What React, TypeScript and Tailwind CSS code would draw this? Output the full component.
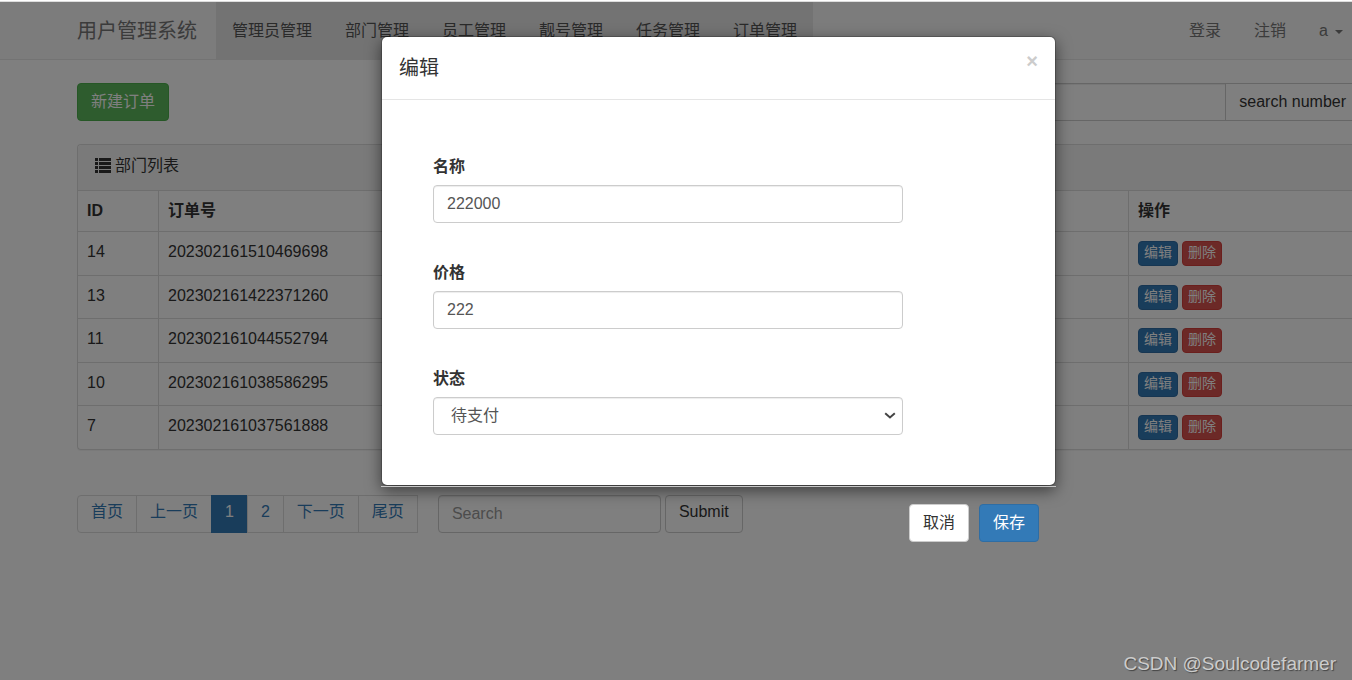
import clsx from "clsx";
import type { ReactNode } from "react";

type ButtonVariant = "default" | "primary" | "success" | "danger";
type ButtonSize = "md" | "xs";

interface ButtonProps {
    variant?: ButtonVariant;
    size?: ButtonSize;
    className?: string;
    children: ReactNode;
}

const buttonVariants: Record<ButtonVariant, string> = {
    default: "bg-white text-[#333] border-[#ccc]",
    primary: "bg-[#337ab7] text-white border-[#2e6da4]",
    success: "bg-[#5cb85c] text-white border-[#4cae4c]",
    danger: "bg-[#d9534f] text-white border-[#d43f3a]",
}

const buttonSizes: Record<ButtonSize, string> = {
    md: "h-[38px] px-[13px] text-base leading-6",
    xs: "h-[25px] px-[5px] pb-[3px] text-sm leading-5",
}

const Button = ({ variant = "default", size = "md", className, children }: ButtonProps) => (
    <button
        type="button"
        className={clsx("flex shrink-0 items-center justify-center whitespace-nowrap rounded border", buttonVariants[variant], buttonSizes[size], className)}
    >
        {children}
    </button>
)

const inputStyle = "h-[38px] rounded border border-[#ccc] bg-white px-[13px] text-base text-[#555] placeholder:text-[#999] shadow-[inset_0_1px_1px_rgba(0,0,0,0.075)]";

const menus = ["管理员管理", "部门管理", "员工管理", "靓号管理", "任务管理", "订单管理"];

const orders = [
    { id: 14, oid: "202302161510469698" },
    { id: 13, oid: "202302161422371260" },
    { id: 11, oid: "202302161044552794" },
    { id: 10, oid: "202302161038586295" },
    { id: 7, oid: "202302161037561888" },
];

const pages = ["首页", "上一页", "1", "2", "下一页", "尾页"];

const Navbar = () => (
    <nav className="flex h-[58px] items-stretch border-b border-[#e7e7e7] bg-[#f8f8f8] pl-[77px] pr-[9px] text-[#777]">
        <a href="#" className="flex items-center pr-[19px] text-xl whitespace-nowrap">用户管理系统</a>
        <ul className="flex gap-px bg-[#e7e7e7] text-[#555]">
            {menus.map((menu) => (
                <li key={menu} className="flex">
                    <a href="#" className="flex items-center px-4 whitespace-nowrap">{menu}</a>
                </li>
            ))}
        </ul>
        <ul className="ml-auto flex items-center gap-[33px] whitespace-nowrap">
            <li><a href="#">登录</a></li>
            <li><a href="#">注销</a></li>
            <li>
                <a href="#" className="flex items-center gap-[7px]">
                    a
                    <svg className="mt-0.5 h-1 w-2" viewBox="0 0 8 4" fill="currentColor">
                        <path d="M0 0h8L4 4z" />
                    </svg>
                </a>
            </li>
        </ul>
    </nav>
)

const ListIcon = () => (
    <svg className="h-4 w-4" viewBox="0 0 16 16" fill="currentColor">
        <path d="M0 0h3v3H0zM4 0h12v3H4zM0 4h3v3H0zM4 4h12v3H4zM0 8h3v3H0zM4 8h12v3H4zM0 12h3v3H0zM4 12h12v3H4z" />
    </svg>
)

const OrderPanel = () => (
    <section className="mt-[23px] rounded-l border border-r-0 border-[#ddd] shadow-[0_1px_1px_rgba(0,0,0,0.05)]">
        <div className="flex h-[46px] items-center gap-1 rounded-tl border-b border-[#ddd] bg-[#f5f5f5] pb-1 pl-[17px]">
            <ListIcon />
            部门列表
        </div>
        <table className="w-full table-fixed border-separate border-spacing-0">
            <thead>
                <tr className="h-[41px] text-left align-top">
                    <th className="w-20 border-b border-[#ddd] px-[9px] pt-2">ID</th>
                    <th className="border-b border-l border-[#ddd] px-[9px] pt-2">订单号</th>
                    <th className="w-56 border-b border-l border-[#ddd] px-[9px] pt-2">操作</th>
                </tr>
            </thead>
            <tbody>
                {orders.map((order, index) => (
                    <tr key={order.id} className={clsx("group align-top", index === 0 || index === 2 ? "h-11" : "h-[43px]")}>
                        <td className="border-b border-[#ddd] px-[9px] pt-2 group-last:border-b-0">{order.id}</td>
                        <td className="border-b border-l border-[#ddd] px-[9px] pt-2 group-last:border-b-0">{order.oid}</td>
                        <td className="border-b border-l border-[#ddd] px-[9px] pt-[9px] group-last:border-b-0">
                            <div className="flex gap-1">
                                <Button variant="primary" size="xs">编辑</Button>
                                <Button variant="danger" size="xs">删除</Button>
                            </div>
                        </td>
                    </tr>
                ))}
            </tbody>
        </table>
    </section>
)

const Pagination = () => (
    <div className="mt-[45px] flex">
        <ul className="flex">
            {pages.map((page) => (
                <li key={page} className="group -ml-px first:ml-0">
                    <a
                        href="#"
                        className={clsx(
                            "flex h-[38px] items-center border px-[13px] pb-1 whitespace-nowrap group-first:rounded-l",
                            page === "1" ? "border-[#337ab7] bg-[#337ab7] text-white" : "border-[#ddd] bg-white text-[#337ab7]"
                        )}
                    >
                        {page}
                    </a>
                </li>
            ))}
        </ul>
        <form className="ml-5 flex gap-1">
            <input type="text" aria-label="页码" placeholder="Search" className={clsx(inputStyle, "w-[223px]")} />
            <Button className="pb-1">Submit</Button>
        </form>
    </div>
)

const Field = ({ id, label, children }: { id: string; label: string; children: ReactNode }) => (
    <div className="flex flex-col gap-1.5">
        <label htmlFor={id} className="font-bold">{label}</label>
        {children}
    </div>
)

const EditModal = () => (
    <div role="dialog" aria-labelledby="modal-title" className="w-[675px]">
        <div className="rounded-md border border-black/20 bg-white bg-clip-padding shadow-[0_5px_15px_rgba(0,0,0,0.5)]">
            <header className="flex h-[63px] items-start justify-between border-b border-[#e5e5e5] px-[17px] pt-[17px]">
                <h4 id="modal-title" className="text-xl leading-7">编辑</h4>
                <button type="button" aria-label="Close" className="text-xl leading-[14px] font-bold text-[#ccc]">×</button>
            </header>
            <form className="flex flex-col gap-[38px] pt-[55px] pr-[152px] pb-[50px] pl-[51px]">
                <Field id="title" label="名称">
                    <input id="title" type="text" defaultValue="222000" className={inputStyle} />
                </Field>
                <Field id="price" label="价格">
                    <input id="price" type="text" defaultValue="222" className={inputStyle} />
                </Field>
                <Field id="status" label="状态">
                    <div className="relative flex">
                        <select id="status" defaultValue="1" className={clsx(inputStyle, "w-full appearance-none pl-[17px]")}>
                            <option value="1">待支付</option>
                        </select>
                        <svg className="pointer-events-none absolute top-[15px] right-[7px] h-[7px] w-3" viewBox="0 0 12 7" fill="none" stroke="#444" strokeWidth="2">
                            <path d="M1.2 1.2 6 5.4l4.8-4.2" />
                        </svg>
                    </div>
                </Field>
            </form>
        </div>
        <footer className="flex justify-end gap-2.5 border-t border-[#c8c8c8] p-[17px]">
            <Button>取消</Button>
            <Button variant="primary">保存</Button>
        </footer>
    </div>
)

export default function App() {
    return (
        <div className="relative min-h-screen overflow-hidden border-t border-white bg-white pt-px font-['Liberation_Sans','Noto_Sans_CJK_SC',sans-serif] text-base leading-6 text-[#333]">
            <Navbar />
            <main className="pt-[23px] pl-[77px]">
                <div className="flex justify-between">
                    <Button variant="success">新建订单</Button>
                    <form className="flex w-[430px]">
                        <input type="text" aria-label="search number" className={clsx(inputStyle, "min-w-0 flex-1 rounded-r-none")} />
                        <Button className="-ml-px rounded-none border-r-0 pr-[6px]">search number</Button>
                    </form>
                </div>
                <OrderPanel />
                <Pagination />
            </main>

            <div className="absolute inset-0 border-t border-[#ddd] bg-black/50 bg-clip-padding" />
            <div className="absolute inset-x-0 top-[35px] flex justify-center pl-[85px]">
                <EditModal />
            </div>
            <p className="absolute right-4 bottom-1 text-[19px] text-[#ccc] [text-shadow:1px_1px_1px_#444]">CSDN @Soulcodefarmer</p>
        </div>
    )
}
